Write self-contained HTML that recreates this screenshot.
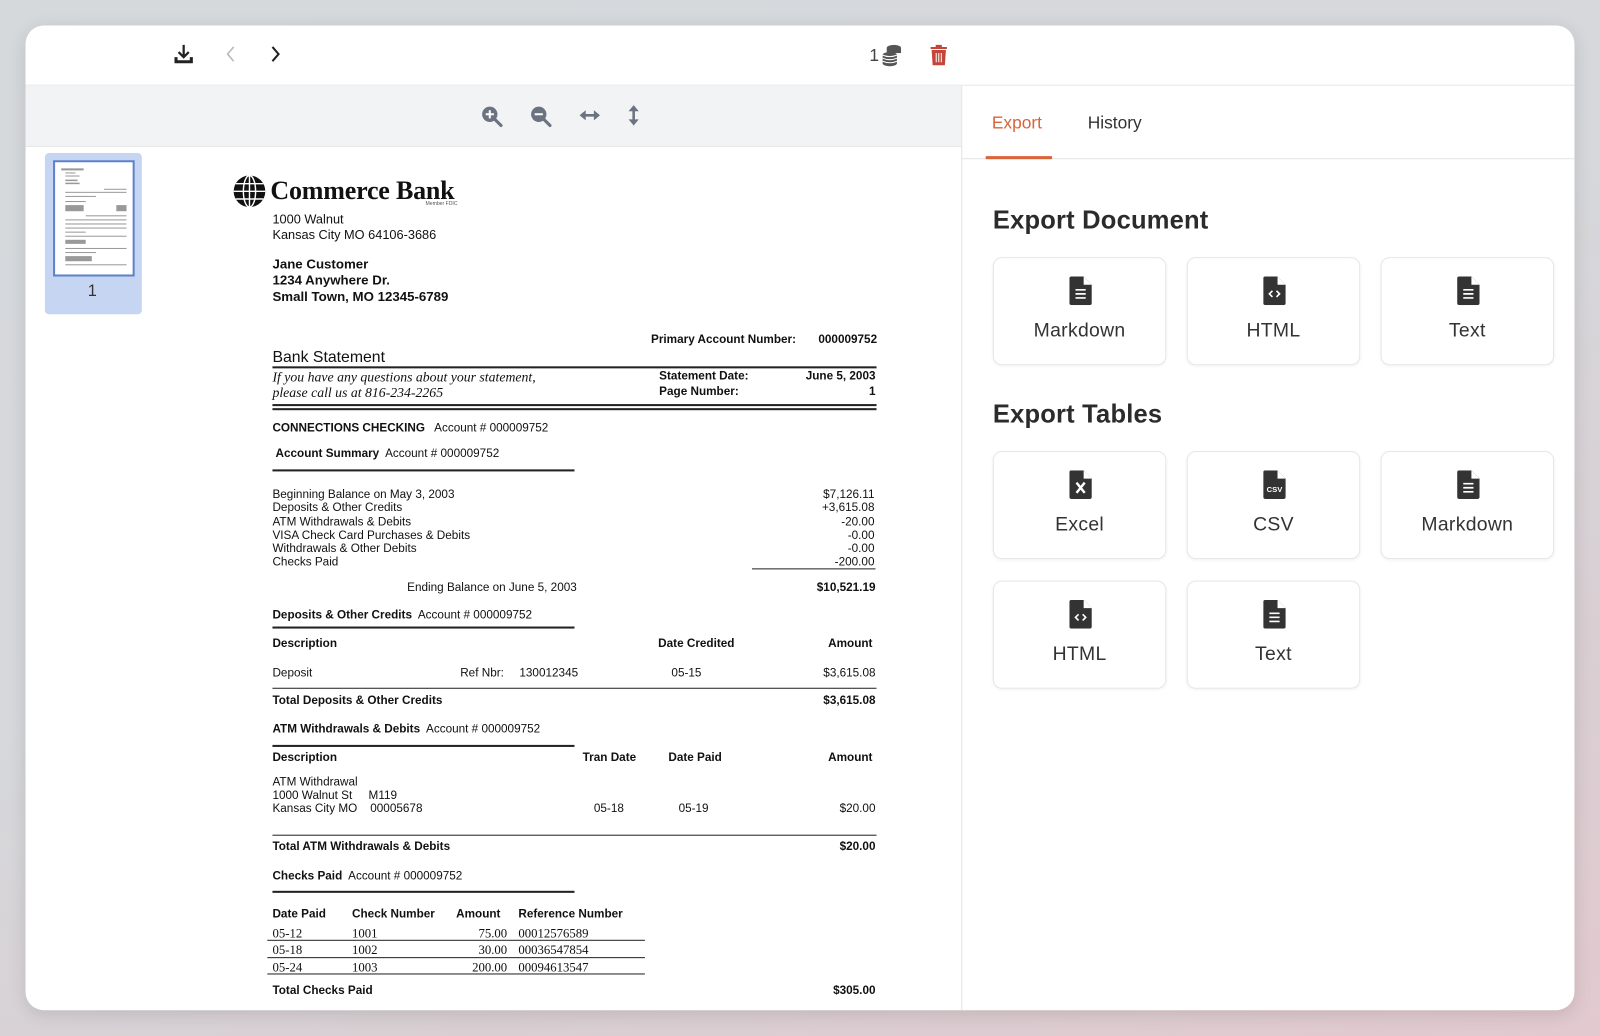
<!DOCTYPE html>
<html><head><meta charset="utf-8"><style>
*{margin:0;padding:0;box-sizing:border-box}
html,body{width:1600px;height:1036px;overflow:hidden}
body{background:linear-gradient(160deg,#d5d9dc 0%,#d6d8db 45%,#d9cfd3 75%,#e2c9cf 100%);font-family:"Liberation Sans",Arial,sans-serif}
#w{position:absolute;left:0;top:0;width:1568px;height:1015px;transform:scale(1.0204);transform-origin:0 0}
.card{position:absolute;left:25px;top:25px;width:1518px;height:965px;background:#fff;border-radius:18px;overflow:hidden;box-shadow:0 4px 18px rgba(0,0,0,.12)}
.a{position:absolute;white-space:nowrap;color:#111}
.d{font-size:11.5px;line-height:13px}
.b{font-weight:bold}
.r{text-align:right}
.ln{position:absolute;background:#222;height:1px}
.t{font-family:"Liberation Serif",serif;font-style:italic;font-size:13.5px;line-height:15px}
.s{font-family:"Liberation Serif",serif;font-size:12.5px;line-height:13px}
.ec{position:absolute;width:170px;height:106px;border:1px solid #e6e6e6;border-radius:9px;box-shadow:0 1px 3px rgba(0,0,0,.05);text-align:center}
.ec svg{position:absolute;left:74px;top:18px}
.ec span{position:absolute;left:0;right:0;top:61px;font-size:19px;color:#333;letter-spacing:.3px}
h2{position:absolute;font-size:25px;font-weight:bold;color:#2b2b2b;letter-spacing:.2px}
</style></head><body><div id="w">
<div class="card">
<div style="position:absolute;left:0;top:0;width:1518px;height:59px;border-bottom:1px solid #e7e7e7"></div>
<svg style="position:absolute;left:145px;top:18px" width="20" height="20" viewBox="0 0 20 20"><path d="M10 1v11M5 8l5 5 5-5" stroke="#222" stroke-width="2.2" fill="none"/><path d="M1 13v6h18v-6h-3v3H4v-3z" fill="#222"/></svg>
<svg style="position:absolute;left:196px;top:20px" width="10" height="16" viewBox="0 0 10 16"><path d="M8 1L2 8l6 7" stroke="#bbb" stroke-width="1.6" fill="none"/></svg>
<svg style="position:absolute;left:240px;top:20px" width="10" height="16" viewBox="0 0 10 16"><path d="M2 1l6 7-6 7" stroke="#222" stroke-width="2" fill="none"/></svg>
<div class="a" style="left:827px;top:20px;font-size:17px;color:#444">1</div>
<svg style="position:absolute;left:838px;top:18px" width="22" height="22" viewBox="0 0 22 22"><g fill="#555"><ellipse cx="13" cy="4" rx="7" ry="3"/><rect x="6" y="4" width="14" height="5"/><ellipse cx="9" cy="11" rx="7" ry="3"/><rect x="2" y="11" width="14" height="8"/><ellipse cx="9" cy="19" rx="7" ry="3"/></g><g stroke="#fff" stroke-width="1" fill="none"><path d="M2 14q7 3 14 0M2 17q7 3 14 0M2 11q7 3 14 0"/></g></svg>
<svg style="position:absolute;left:886px;top:18px" width="18" height="22" viewBox="0 0 18 22"><path d="M6 1h6v2h5v2H1V3h5z" fill="#c4453a"/><path d="M2 6h14l-1 15H3z" fill="#c4453a"/><path d="M6.5 9v9M9 9v9M11.5 9v9" stroke="#fff" stroke-width="1"/></svg>
<div style="position:absolute;left:0;top:59px;width:917px;height:60px;background:#f2f3f4;border-bottom:1px solid #e8e8e8"></div>
<div style="position:absolute;left:917px;top:59px;width:1px;height:906px;background:#e3e3e3"></div>
<svg style="position:absolute;left:446px;top:78px" width="22" height="22" viewBox="0 0 22 22"><circle cx="9" cy="9" r="7.5" fill="#6b7280"/><path d="M14 14l6 6" stroke="#6b7280" stroke-width="3" stroke-linecap="round"/><path d="M9 5v8M5 9h8" stroke="#fff" stroke-width="2"/></svg>
<svg style="position:absolute;left:494px;top:78px" width="22" height="22" viewBox="0 0 22 22"><circle cx="9" cy="9" r="7.5" fill="#6b7280"/><path d="M14 14l6 6" stroke="#6b7280" stroke-width="3" stroke-linecap="round"/><path d="M5 9h8" stroke="#fff" stroke-width="2"/></svg>
<svg style="position:absolute;left:542px;top:81px" width="22" height="14" viewBox="0 0 22 14"><path d="M1 7l6-5v10zM21 7l-6-5v10z" fill="#6b7280"/><path d="M5 7h12" stroke="#6b7280" stroke-width="2.5"/></svg>
<svg style="position:absolute;left:589px;top:77px" width="14" height="22" viewBox="0 0 14 22"><path d="M7 1L2 7h10zM7 21l-5-6h10z" fill="#6b7280"/><path d="M7 5v12" stroke="#6b7280" stroke-width="2.5"/></svg>
<div style="position:absolute;left:19px;top:125px;width:95px;height:158px;background:#c6d6f2;border-radius:4px"></div>
<div style="position:absolute;left:27px;top:132px;width:80px;height:114px;background:#fff;border:2px solid #5b80cc">
<svg width="76" height="110" viewBox="0 0 76 110"><g fill="#999"><rect x="6" y="6" width="22" height="2"/><rect x="10" y="10" width="10" height="1"/><rect x="10" y="13" width="14" height="1"/><rect x="10" y="17" width="12" height="1.5"/><rect x="10" y="20" width="14" height="1.5"/><rect x="48" y="26" width="22" height="1"/><rect x="10" y="29" width="60" height="1"/><rect x="10" y="33" width="30" height="1"/><rect x="10" y="38" width="20" height="1"/><rect x="10" y="42" width="18" height="6"/><rect x="60" y="42" width="10" height="6"/><rect x="30" y="52" width="40" height="1"/><rect x="10" y="56" width="60" height="1"/><rect x="10" y="60" width="60" height="1"/><rect x="10" y="64" width="60" height="1"/><rect x="10" y="68" width="20" height="1"/><rect x="10" y="72" width="60" height="1"/><rect x="10" y="76" width="20" height="4"/><rect x="10" y="84" width="60" height="1"/><rect x="10" y="88" width="30" height="1"/><rect x="10" y="92" width="26" height="5"/><rect x="10" y="100" width="60" height="1"/></g></svg></div>
<div class="a" style="left:61px;top:252px;font-size:16px;color:#333">1</div>
<div style="position:absolute;left:0;top:2px">
<svg style="position:absolute;left:203px;top:144px" width="33" height="33" viewBox="0 0 33 33"><circle cx="16.5" cy="16.5" r="15.5" fill="#111"/><g stroke="#fff" stroke-width="1.4" fill="none"><ellipse cx="16.5" cy="16.5" rx="6" ry="15.5"/><path d="M16.5 1v31M1 16.5h31M3 9h27M3 24h27"/></g></svg>
<div class="a b" style="left:240px;top:145px;font-family:'Liberation Serif',serif;font-size:25.5px;letter-spacing:-.2px">Commerce Bank</div>
<div class="a" style="left:392px;top:170px;font-size:5px;color:#555">Member FDIC</div>
<div class="a d" style="left:242px;top:182px;font-size:12.5px">1000 Walnut</div>
<div class="a d" style="left:242px;top:197px;font-size:12.5px">Kansas City MO 64106-3686</div>
<div class="a b" style="left:242px;top:225px;font-size:13px;line-height:14px">Jane Customer</div>
<div class="a b" style="left:242px;top:241px;font-size:13px;line-height:14px">1234 Anywhere Dr.</div>
<div class="a b" style="left:242px;top:257px;font-size:13px;line-height:14px">Small Town, MO 12345-6789</div>
<div class="a d b" style="left:613px;top:300px">Primary Account Number:</div>
<div class="a d b" style="left:777px;top:300px">000009752</div>
<div class="a" style="left:242px;top:315px;font-size:15.5px">Bank Statement</div>
<div class="ln" style="left:242px;top:332px;width:592px;height:2px"></div>
<div class="a t" style="left:242px;top:335px">If you have any questions about your statement,</div>
<div class="a t" style="left:242px;top:350px">please call us at 816-234-2265</div>
<div class="a d b" style="left:621px;top:336px">Statement Date:</div>
<div class="a d b r" style="left:733px;top:336px;width:100px">June 5, 2003</div>
<div class="a d b" style="left:621px;top:351px">Page Number:</div>
<div class="a d b r" style="left:733px;top:351px;width:100px">1</div>
<div class="ln" style="left:242px;top:369px;width:592px;height:2px"></div>
<div class="ln" style="left:242px;top:373px;width:592px;height:2px"></div>
<div class="a d" style="left:242px;top:387px"><b>CONNECTIONS CHECKING</b>&nbsp;&nbsp; Account # 000009752</div>
<div class="a d" style="left:245px;top:412px"><b>Account Summary</b>&nbsp; Account # 000009752</div>
<div class="ln" style="left:242px;top:433px;width:296px;height:2px"></div>
<div class="a d" style="left:242px;top:452px;line-height:13.3px">Beginning Balance on May 3, 2003<br>Deposits &amp; Other Credits<br>ATM Withdrawals &amp; Debits<br>VISA Check Card Purchases &amp; Debits<br>Withdrawals &amp; Other Debits<br>Checks Paid</div>
<div class="a d r" style="left:732px;top:452px;width:100px;line-height:13.3px">$7,126.11<br>+3,615.08<br>-20.00<br>-0.00<br>-0.00<br>-200.00</div>
<div class="ln" style="left:712px;top:530px;width:121px"></div>
<div class="a d" style="left:374px;top:543px">Ending Balance on June 5, 2003</div>
<div class="a d b r" style="left:733px;top:543px;width:100px">$10,521.19</div>
<div class="a d" style="left:242px;top:570px"><b>Deposits &amp; Other Credits</b>&nbsp; Account # 000009752</div>
<div class="ln" style="left:242px;top:587px;width:296px;height:2px"></div>
<div class="a d b" style="left:242px;top:598px">Description</div>
<div class="a d b" style="left:620px;top:598px">Date Credited</div>
<div class="a d b r" style="left:730px;top:598px;width:100px">Amount</div>
<div class="a d" style="left:242px;top:627px">Deposit</div>
<div class="a d" style="left:426px;top:627px">Ref Nbr:</div>
<div class="a d" style="left:484px;top:627px">130012345</div>
<div class="a d" style="left:633px;top:627px">05-15</div>
<div class="a d r" style="left:733px;top:627px;width:100px">$3,615.08</div>
<div class="ln" style="left:242px;top:647px;width:592px"></div>
<div class="a d b" style="left:242px;top:654px">Total Deposits &amp; Other Credits</div>
<div class="a d b r" style="left:733px;top:654px;width:100px">$3,615.08</div>
<div class="a d" style="left:242px;top:682px"><b>ATM Withdrawals &amp; Debits</b>&nbsp; Account # 000009752</div>
<div class="ln" style="left:242px;top:703px;width:296px;height:2px"></div>
<div class="a d b" style="left:242px;top:710px">Description</div>
<div class="a d b" style="left:546px;top:710px">Tran Date</div>
<div class="a d b" style="left:630px;top:710px">Date Paid</div>
<div class="a d b r" style="left:730px;top:710px;width:100px">Amount</div>
<div class="a d" style="left:242px;top:734px">ATM Withdrawal</div>
<div class="a d" style="left:242px;top:747px">1000 Walnut St&nbsp;&nbsp;&nbsp;&nbsp; M119</div>
<div class="a d" style="left:242px;top:760px">Kansas City MO&nbsp;&nbsp;&nbsp; 00005678</div>
<div class="a d" style="left:557px;top:760px">05-18</div>
<div class="a d" style="left:640px;top:760px">05-19</div>
<div class="a d r" style="left:733px;top:760px;width:100px">$20.00</div>
<div class="ln" style="left:242px;top:791px;width:592px"></div>
<div class="a d b" style="left:242px;top:797px">Total ATM Withdrawals &amp; Debits</div>
<div class="a d b r" style="left:733px;top:797px;width:100px">$20.00</div>
<div class="a d" style="left:242px;top:826px"><b>Checks Paid</b>&nbsp; Account # 000009752</div>
<div class="ln" style="left:242px;top:846px;width:296px;height:2px"></div>
<div class="a d b" style="left:242px;top:863px">Date Paid</div>
<div class="a d b" style="left:320px;top:863px">Check Number</div>
<div class="a d b" style="left:422px;top:863px">Amount</div>
<div class="a d b" style="left:483px;top:863px">Reference Number</div>
<div class="a s" style="left:242px;top:882px">05-12</div><div class="a s" style="left:320px;top:882px">1001</div><div class="a s r" style="left:412px;top:882px;width:60px">75.00</div><div class="a s" style="left:483px;top:882px">00012576589</div>
<div class="ln" style="left:237px;top:894px;width:370px"></div>
<div class="a s" style="left:242px;top:898px">05-18</div><div class="a s" style="left:320px;top:898px">1002</div><div class="a s r" style="left:412px;top:898px;width:60px">30.00</div><div class="a s" style="left:483px;top:898px">00036547854</div>
<div class="ln" style="left:237px;top:911px;width:370px"></div>
<div class="a s" style="left:242px;top:915px">05-24</div><div class="a s" style="left:320px;top:915px">1003</div><div class="a s r" style="left:412px;top:915px;width:60px">200.00</div><div class="a s" style="left:483px;top:915px">00094613547</div>
<div class="ln" style="left:237px;top:927px;width:370px"></div>
<div class="a d b" style="left:242px;top:938px">Total Checks Paid</div>
<div class="a d b r" style="left:733px;top:938px;width:100px">$305.00</div>
</div>
<div style="position:absolute;left:918px;top:130px;width:600px;height:1px;background:#e5e5e5"></div>
<div class="a" style="left:947px;top:86px;font-size:17px;color:#d9643a">Export</div>
<div style="position:absolute;left:941px;top:128px;width:65px;height:3px;background:#d9643a"></div>
<div class="a" style="left:1041px;top:86px;font-size:17px;color:#333">History</div>
<h2 style="left:948px;top:177px">Export Document</h2>
<h2 style="left:948px;top:367px">Export Tables</h2>
<svg width="0" height="0" style="position:absolute"><defs>
<path id="f" d="M2 0h12l8 8v18a2 2 0 0 1-2 2H2a2 2 0 0 1-2-2V2a2 2 0 0 1 2-2z" fill="#333"/>
</defs></svg>
<div class="ec" style="left:948px;top:227px"><svg width="22" height="28"><use href="#f"/><path d="M14 0v8h8" fill="#fff"/><path d="M6 13h10M6 17h10M6 21h10" stroke="#fff" stroke-width="1.6"/></svg><span>Markdown</span></div>
<div class="ec" style="left:1138px;top:227px"><svg width="22" height="28"><use href="#f"/><path d="M14 0v8h8" fill="#fff"/><path d="M9 14l-3 3 3 3M13 14l3 3-3 3" stroke="#fff" stroke-width="1.6" fill="none"/></svg><span>HTML</span></div>
<div class="ec" style="left:1328px;top:227px"><svg width="22" height="28"><use href="#f"/><path d="M14 0v8h8" fill="#fff"/><path d="M6 13h10M6 17h10M6 21h10" stroke="#fff" stroke-width="1.6"/></svg><span>Text</span></div>
<div class="ec" style="left:948px;top:417px"><svg width="22" height="28"><use href="#f"/><path d="M14 0v8h8" fill="#fff"/><path d="M7 12l8 10M15 12l-8 10" stroke="#fff" stroke-width="2.4"/></svg><span>Excel</span></div>
<div class="ec" style="left:1138px;top:417px"><svg width="22" height="28"><use href="#f"/><path d="M14 0v8h8" fill="#fff"/><text x="11" y="21" font-size="7.5" font-weight="bold" fill="#fff" text-anchor="middle" font-family="Liberation Sans Narrow,Liberation Sans,sans-serif">CSV</text></svg><span>CSV</span></div>
<div class="ec" style="left:1328px;top:417px"><svg width="22" height="28"><use href="#f"/><path d="M14 0v8h8" fill="#fff"/><path d="M6 13h10M6 17h10M6 21h10" stroke="#fff" stroke-width="1.6"/></svg><span>Markdown</span></div>
<div class="ec" style="left:948px;top:544px"><svg width="22" height="28"><use href="#f"/><path d="M14 0v8h8" fill="#fff"/><path d="M9 14l-3 3 3 3M13 14l3 3-3 3" stroke="#fff" stroke-width="1.6" fill="none"/></svg><span>HTML</span></div>
<div class="ec" style="left:1138px;top:544px"><svg width="22" height="28"><use href="#f"/><path d="M14 0v8h8" fill="#fff"/><path d="M6 13h10M6 17h10M6 21h10" stroke="#fff" stroke-width="1.6"/></svg><span>Text</span></div>
</div>
</div></body></html>
